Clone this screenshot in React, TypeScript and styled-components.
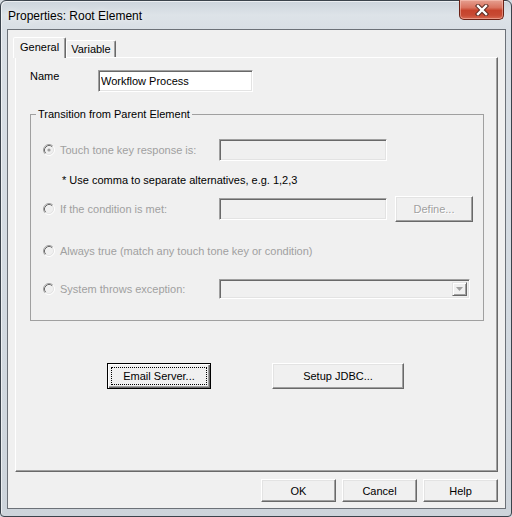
import React from "react";
import styled, { createGlobalStyle } from "styled-components";

const Global = createGlobalStyle`
  html, body { margin: 0; padding: 0; background: #d6dce2; }
  body {
    font-family: "Liberation Sans", Arial, sans-serif;
    font-size: 11px;
    color: #000;
  }
  * { box-sizing: border-box; }
`;

const Window = styled.div`
  width: 512px;
  height: 517px;
  display: flex;
  flex-direction: column;
  border: 1px solid #3b434c;
  border-radius: 6px 6px 4px 4px;
  padding: 0 5px 7px 6px;
  background: linear-gradient(
    to bottom,
    #ccd4dc 0px,
    #dde3e8 14px,
    #d9dfe5 28px,
    #d3dae1 60%,
    #cdd4db 100%
  );
  box-shadow: inset 1px 1px 0 rgba(255, 255, 255, 0.6);
`;

const TitleBar = styled.div`
  height: 28px;
  flex-shrink: 0;
  display: flex;
  align-items: flex-start;
  justify-content: space-between;
`;

const Title = styled.span`
  margin-top: 7px;
  padding-left: 1px;
  font-size: 12px;
  line-height: 16px;
  color: #000;
  text-shadow: 0 0 6px rgba(255, 255, 255, 0.9);
`;

const CloseButton = styled.div`
  width: 45px;
  height: 20px;
  margin-top: -1px;
  margin-right: 2px;
  border: 1px solid #6b2216;
  border-top: none;
  border-radius: 0 0 5px 5px;
  background: linear-gradient(
    to bottom,
    #e6a091 0%,
    #d9735f 40%,
    #c6432c 55%,
    #c84a33 80%,
    #d86a52 100%
  );
  box-shadow: inset 0 0 0 1px rgba(255, 210, 200, 0.45);
  display: flex;
  align-items: center;
  justify-content: center;
`;

const Client = styled.div`
  flex: 1;
  display: flex;
  flex-direction: column;
  border: 1px solid #6c7178;
  background: #f0f0f0;
  padding: 7px 7px 6px 7px;
`;

const TabStrip = styled.div`
  height: 20px;
  flex-shrink: 0;
  display: flex;
  align-items: flex-end;
`;

const Tab = styled.div<{ $active?: boolean }>`
  position: relative;
  z-index: ${(p) => (p.$active ? 2 : 1)};
  height: ${(p) => (p.$active ? 21 : 17)}px;
  margin-left: ${(p) => (p.$active ? -2 : 0)}px;
  margin-bottom: ${(p) => (p.$active ? -1 : 0)}px;
  padding: ${(p) => (p.$active ? "0 6px 1px" : "0 4px")};
  display: flex;
  align-items: center;
  border-style: solid;
  border-width: 1px 1px 0 1px;
  border-color: #fff #696969 transparent #fff;
  border-radius: 2px 2px 0 0;
  box-shadow: inset -1px 0 0 #a0a0a0;
  background: #f0f0f0;
  line-height: 13px;
  white-space: nowrap;
`;

const Panel = styled.div`
  flex: 1;
  display: flex;
  flex-direction: column;
  border: 1px solid;
  border-color: #fff #696969 #696969 #fff;
  box-shadow: inset -1px -1px 0 #a0a0a0;
  padding: 12px 13px 0 14px;
`;

const NameRow = styled.div`
  display: flex;
  align-items: flex-start;
  height: 22px;
`;

const FieldLabel = styled.span`
  width: 68px;
  line-height: 13px;
`;

const TextBox = styled.input<{ $w: number; $h?: number }>`
  width: ${(p) => p.$w}px;
  height: ${(p) => p.$h ?? 22}px;
  flex-shrink: 0;
  margin: 0;
  padding: 0 2px;
  border: 1px solid;
  border-color: #a0a0a0 #fff #fff #a0a0a0;
  box-shadow: inset 1px 1px 0 #696969, inset -1px -1px 0 #e3e3e3;
  background: ${(p) => (p.disabled ? "#f0f0f0" : "#fff")};
  font-family: "Liberation Sans", Arial, sans-serif;
  font-size: 11px;
  color: #000;
  outline: none;
`;

const Group = styled.fieldset`
  margin: 16px 0 0 0;
  width: 454px;
  min-width: 0;
  border: 1px solid #a0a0a0;
  padding: 18px 0 20px 0;
`;

const Legend = styled.legend`
  margin-left: 5px;
  padding: 0 2px;
  line-height: 13px;
  color: #000;
`;

const GroupBody = styled.div`
  display: flex;
  flex-direction: column;
  padding-left: 12px;
`;

const OptionRow = styled.div<{ $h: number; $mt?: number }>`
  display: flex;
  align-items: center;
  height: ${(p) => p.$h}px;
  margin-top: ${(p) => p.$mt ?? 0}px;
`;

const Option = styled.label`
  min-width: 176px;
  flex-shrink: 0;
  display: flex;
  align-items: center;
  gap: 5px;
  color: #a0a0a0;
  line-height: 13px;
  white-space: nowrap;
`;

const RadioIcon = styled.svg`
  flex-shrink: 0;
  display: block;
`;

const Note = styled.div`
  margin-top: 13px;
  padding-left: 19px;
  line-height: 13px;
  color: #000;
`;

const Button = styled.button<{ $w: number; $h: number }>`
  width: ${(p) => p.$w}px;
  height: ${(p) => p.$h}px;
  flex-shrink: 0;
  margin: 0;
  padding: 0;
  display: flex;
  align-items: center;
  justify-content: center;
  border: 1px solid;
  border-color: #fff #696969 #696969 #fff;
  box-shadow: inset -1px -1px 0 #a0a0a0, inset 1px 1px 0 #e3e3e3;
  background: #f0f0f0;
  font-family: "Liberation Sans", Arial, sans-serif;
  font-size: 11px;
  color: #000;
  &:disabled {
    color: #a0a0a0;
    text-shadow: 1px 1px 0 #fff;
  }
`;

const SideButton = styled(Button)`
  margin-left: 8px;
`;

const DefaultButton = styled(Button)`
  border: 1px solid #000;
  box-shadow: inset 1px 1px 0 #fff, inset -1px -1px 0 #696969,
    inset -2px -2px 0 #a0a0a0;
  padding: 3px;
`;

const FocusRing = styled.span`
  flex: 1;
  align-self: stretch;
  display: flex;
  align-items: center;
  justify-content: center;
  border: 1px dotted #000;
`;

const Combo = styled.div<{ $w: number }>`
  width: ${(p) => p.$w}px;
  height: 20px;
  flex-shrink: 0;
  display: flex;
  justify-content: flex-end;
  align-items: stretch;
  padding: 2px;
  border: 1px solid;
  border-color: #a0a0a0 #fff #fff #a0a0a0;
  box-shadow: inset 1px 1px 0 #696969, inset -1px -1px 0 #e3e3e3;
  background: #f0f0f0;
`;

const ComboArrow = styled.div`
  width: 15px;
  display: flex;
  align-items: center;
  justify-content: center;
  border: 1px solid;
  border-color: #e3e3e3 #696969 #696969 #e3e3e3;
  box-shadow: inset 1px 1px 0 #fff, inset -1px -1px 0 #a0a0a0;
  background: #f0f0f0;
`;

const ActionRow = styled.div`
  display: flex;
  gap: 61px;
  margin-top: 42px;
  padding-left: 77px;
`;

const Footer = styled.div`
  display: flex;
  justify-content: flex-end;
  gap: 6px;
  margin-top: 7px;
  flex-shrink: 0;
`;

const Radio = ({ checked }: { checked?: boolean }) => (
  <RadioIcon width="12" height="12" viewBox="0 0 12 12">
    <circle cx="6" cy="6" r="4" fill="#f0f0f0" />
    <path d="M2.11 9.89 A5.5 5.5 0 0 1 9.89 2.11" fill="none" stroke="#a0a0a0" />
    <path d="M9.89 2.11 A5.5 5.5 0 0 1 2.11 9.89" fill="none" stroke="#ffffff" />
    <path d="M2.82 9.18 A4.5 4.5 0 0 1 9.18 2.82" fill="none" stroke="#696969" />
    <path d="M9.18 2.82 A4.5 4.5 0 0 1 2.82 9.18" fill="none" stroke="#e3e3e3" />
    {checked && <circle cx="6" cy="6" r="1.6" fill="#a0a0a0" />}
  </RadioIcon>
);

const CloseGlyph = () => (
  <svg width="14" height="12" viewBox="0 0 14 12">
    <path d="M3 2 L11 10 M11 2 L3 10" stroke="#5a2a22" strokeWidth="4.4" strokeLinecap="square" />
    <path d="M3 2 L11 10 M11 2 L3 10" stroke="#ffffff" strokeWidth="2.4" strokeLinecap="square" />
  </svg>
);

const DownArrow = () => (
  <svg width="7" height="4" viewBox="0 0 7 4">
    <path d="M0 0 H7 L3.5 4 Z" fill="#a0a0a0" />
  </svg>
);

export default function App() {
  return (
    <>
      <Global />
      <Window>
        <TitleBar>
          <Title>Properties: Root Element</Title>
          <CloseButton>
            <CloseGlyph />
          </CloseButton>
        </TitleBar>
        <Client>
          <TabStrip>
            <Tab $active>General</Tab>
            <Tab>Variable</Tab>
          </TabStrip>
          <Panel>
            <NameRow>
              <FieldLabel>Name</FieldLabel>
              <TextBox $w={155} defaultValue="Workflow Process" readOnly />
            </NameRow>
            <Group>
              <Legend>Transition from Parent Element</Legend>
              <GroupBody>
                <OptionRow $h={22}>
                  <Option>
                    <Radio checked />
                    Touch tone key response is:
                  </Option>
                  <TextBox $w={168} disabled />
                </OptionRow>
                <Note>* Use comma to separate alternatives, e.g. 1,2,3</Note>
                <OptionRow $h={26} $mt={9}>
                  <Option>
                    <Radio />
                    If the condition is met:
                  </Option>
                  <TextBox $w={168} disabled />
                  <SideButton $w={78} $h={26} disabled>
                    Define...
                  </SideButton>
                </OptionRow>
                <OptionRow $h={22} $mt={18}>
                  <Option>
                    <Radio />
                    Always true (match any touch tone key or condition)
                  </Option>
                </OptionRow>
                <OptionRow $h={22} $mt={16}>
                  <Option>
                    <Radio />
                    System throws exception:
                  </Option>
                  <Combo $w={251}>
                    <ComboArrow>
                      <DownArrow />
                    </ComboArrow>
                  </Combo>
                </OptionRow>
              </GroupBody>
            </Group>
            <ActionRow>
              <DefaultButton $w={104} $h={26}>
                <FocusRing>Email Server...</FocusRing>
              </DefaultButton>
              <Button $w={132} $h={26}>Setup JDBC...</Button>
            </ActionRow>
          </Panel>
          <Footer>
            <Button $w={75} $h={23}>OK</Button>
            <Button $w={75} $h={23}>Cancel</Button>
            <Button $w={75} $h={23}>Help</Button>
          </Footer>
        </Client>
      </Window>
    </>
  );
}
